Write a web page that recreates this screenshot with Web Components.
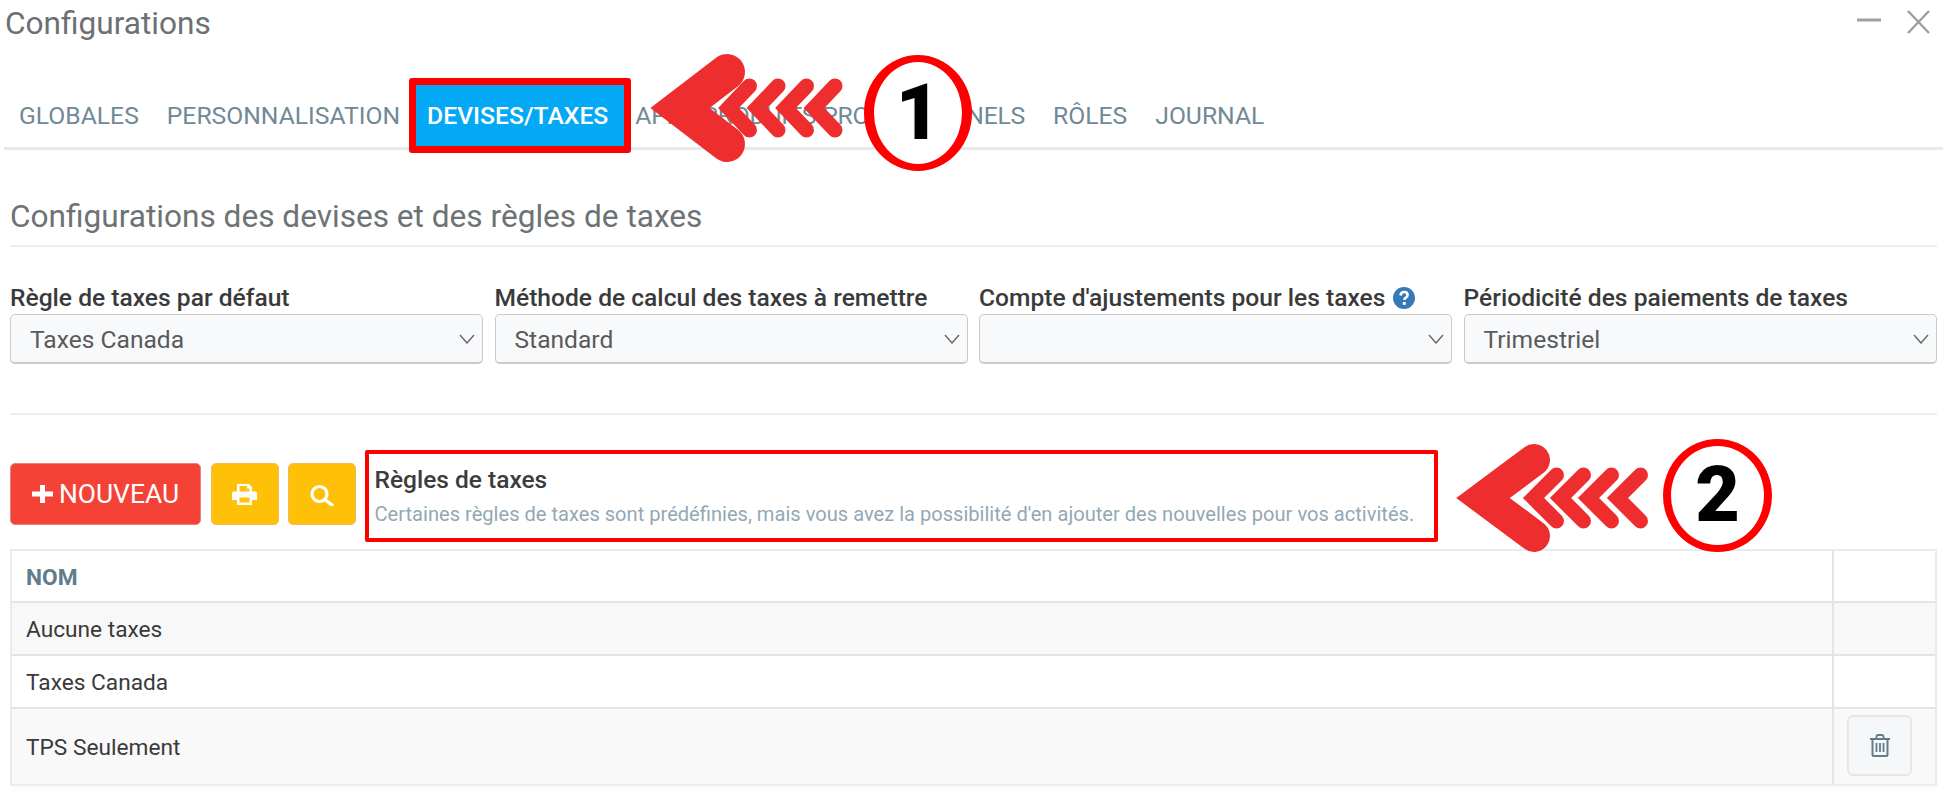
<!DOCTYPE html>
<html lang="fr">
<head>
<meta charset="utf-8">
<title>Configurations</title>
<style>
  html, body { margin: 0; background: #fff; }
  body { font-family: Roboto, "Liberation Sans", sans-serif; }
</style>
</head>
<body>
<config-page></config-page>

<script>
class ConfigHeader extends HTMLElement {
  constructor(){
    super();
    this.attachShadow({mode: 'open'});
    this.shadowRoot.innerHTML = `
      <style>
        :host { display: flex; justify-content: space-between; height: 78px; padding: 7px 13px 0 5px; box-sizing: border-box; }
        h1 { margin: 0; font-size: 31.6px; line-height: 34px; font-weight: 400; color: #6c7072; }
        .actions { display: flex; gap: 26px; align-items: flex-start; padding-top: 3px; }
        svg { display: block; }
      </style>
      <h1><slot></slot></h1>
      <div class="actions">
        <svg width="24" height="24" viewBox="0 0 24 24"><path d="M0 10h24" stroke="#9e9e9e" stroke-width="3"/></svg>
        <svg width="23" height="24" viewBox="0 0 23 24"><path d="M1 1l21 22M22 1L1 23" stroke="#9e9e9e" stroke-width="2.4" fill="none"/></svg>
      </div>
    `;
  }
}

class TabBar extends HTMLElement {
  constructor(){
    super();
    this.attachShadow({mode: 'open'});
    this.shadowRoot.innerHTML = `
      <style>
        :host { display: flex; align-items: stretch; height: 72px; margin-left: 4px; border-bottom: 3px solid #e9e9ea; box-sizing: border-box; padding: 7px 0 0 0; }
      </style>
      <slot></slot>
    `;
  }
}

class TabItem extends HTMLElement {
  constructor(){
    super();
    this.attachShadow({mode: 'open'});
    this.shadowRoot.innerHTML = `
      <style>
        :host { display: block; position: relative; padding: 16px 13px 0 15px; font-size: 24.7px; line-height: 30px; color: #6f8997; white-space: nowrap; }
        :host([active]) { background: #03a9f4; color: #fff; font-weight: 500; height: 62px; box-sizing: border-box; padding: 16px 16px 0 11px; margin: 0 -4px 0 3px; }
        :host([active])::after { content: ""; position: absolute; inset: -7px -7px -6px -7px; border: 7px solid #ff0000; border-radius: 3px; }
      </style>
      <slot></slot>
    `;
  }
}

class SelectField extends HTMLElement {
  constructor(){
    super();
    this.attachShadow({mode: 'open'});
    this.shadowRoot.innerHTML = `
      <style>
        :host { display: block; min-width: 0; }
        label { display: flex; align-items: center; height: 21px; margin-bottom: 6px; font-size: 24.6px; line-height: 21px; font-weight: 500; color: #3a3a3a; white-space: nowrap; }
        .box { display: flex; align-items: center; justify-content: space-between; height: 50px; padding: 1px 7px 0 19px; box-sizing: border-box;
          background: #f8f9fb; border: 1px solid #c9cacb; border-bottom-width: 2px; border-radius: 5px; font-size: 24.6px; color: #5a5a5a; }
        svg { flex: none; }
      </style>
      <label><slot name="label"></slot></label>
      <div class="box">
        <span><slot></slot></span>
        <svg width="16" height="10" viewBox="0 0 16 10"><path d="M1 1l7 8 7-8" fill="none" stroke="#666" stroke-width="1.4"/></svg>
      </div>
    `;
  }
}

class ToolButton extends HTMLElement {
  constructor(){
    super();
    this.attachShadow({mode: 'open'});
    this.shadowRoot.innerHTML = `
      <style>
        :host { display: flex; align-items: center; justify-content: center; gap: 6px; height: 62px; margin-top: 13px; box-sizing: border-box; width: 68px; border-radius: 5px;
          background: #ffc107; border: 1px solid #f3b95a; color: #fff; font-size: 26.4px; }
        :host([danger]) { width: 191px; background: #f44336; border-color: #e8827a; }
      </style>
      <slot></slot>
    `;
  }
}

class RulesCallout extends HTMLElement {
  constructor(){
    super();
    this.attachShadow({mode: 'open'});
    this.shadowRoot.innerHTML = `
      <style>
        :host { display: block; width: 1073px; height: 92px; margin-left: -1px; box-sizing: border-box; border: 4px solid #ff0000; padding: 12px 6px 0; border-radius: 2px; }
        h2 { margin: 0; font-size: 24.5px; line-height: 28px; font-weight: 500; color: #3c3c3c; }
        p { margin: 8px 0 0; font-size: 20.1px; line-height: 24px; color: #93a8b4; white-space: nowrap; }
      </style>
      <h2><slot name="title"></slot></h2>
      <p><slot></slot></p>
    `;
  }
}

class RulesTable extends HTMLElement {
  constructor(){
    super();
    this.attachShadow({mode: 'open'});
    this.shadowRoot.innerHTML = `
      <style>
        :host { display: block; border: 2px solid #e8ecee; border-top-color: #e6edf2; box-sizing: border-box; box-shadow: 0 5px 6px rgba(0,0,0,.015); }
      </style>
      <slot></slot>
    `;
  }
}

class RulesRow extends HTMLElement {
  constructor(){
    super();
    this.attachShadow({mode: 'open'});
    this.shadowRoot.innerHTML = `
      <style>
        :host { display: grid; grid-template-columns: 1fr 103px; height: 53px; box-sizing: border-box; border-top: 2px solid #e3e4e4; font-size: 22.7px; color: #3a3a3a; background: #fff; }
        :host([first]) { border-top: 0; height: 50px; font-weight: 700; color: #607d8b; }
        :host([shade]) { background: #f8f8f8; }
        :host([tall]) { height: 77px; background: #f9f9fa; }
        .name { display: flex; align-items: center; padding: 2px 0 0 14px; }
        .end { display: flex; align-items: center; justify-content: center; border-left: 2px solid #e3e4e4; padding-right: 10px; }
      </style>
      <div class="name"><slot></slot></div>
      <div class="end"><slot name="end"></slot></div>
    `;
  }
}

class TrashButton extends HTMLElement {
  constructor(){
    super();
    this.attachShadow({mode: 'open'});
    this.shadowRoot.innerHTML = `
      <style>
        :host { display: flex; align-items: center; justify-content: center; width: 65px; height: 61px; margin-bottom: 2px; box-sizing: border-box; border: 2px solid #e1e7ea; border-radius: 6px; background: #f5f7f8; }
      </style>
      <svg width="20" height="23" viewBox="0 0 20 23" fill="none" stroke="#607d8b">
        <path d="M0 5h20" stroke-width="2"/>
        <path d="M6.500 5V2.600Q6.500 1 8 1h4q1.500 0 1.500 1.600V5" stroke-width="1.800"/>
        <path d="M2.500 5v15.500q0 1.500 1.500 1.500h12q1.500 0 1.500-1.500V5" stroke-width="2"/>
        <path d="M6.500 9v9M10 9v9M13.500 9v9" stroke-width="1.800"/>
      </svg>
    `;
  }
}

class CalloutMark extends HTMLElement {
  constructor(){
    super();
    this.attachShadow({mode: 'open'});
    this.shadowRoot.innerHTML = `
      <style>
        :host { display: block; position: absolute; left: var(--x); top: var(--y); width: 330px; height: 125px; }
        svg { position: absolute; left: 0; top: 0; overflow: visible; }
        .num { position: absolute; left: var(--nx); top: var(--ny); width: var(--nw); height: var(--nh); box-sizing: border-box; border: 7px solid #ff0000; border-left-width: var(--side); border-right-width: var(--side); border-radius: 50%; background: #fff;
          display: flex; align-items: center; justify-content: center; font-family: Roboto, "Liberation Sans", sans-serif; font-weight: 900; font-size: 77px; line-height: 1; color: #000; }
      </style>
      <svg width="200" height="125" viewBox="0 0 200 125" fill="none" stroke="#ee2e2e" stroke-linecap="round" stroke-linejoin="miter">
        <g stroke-width="15" class="small"></g>
        <path class="big"/>
      </svg>
      <div class="num"><slot></slot></div>
    `;
  }
  connectedCallback() {
    // four small chevrons first, the big one goes in front
    const mid = 54;
    const [tip, back, arm, width] = this.getAttribute('big').split(',').map(Number);
    const [sBack, sArm] = this.getAttribute('small').split(',').map(Number);
    const tips = this.getAttribute('tips').split(',').map(Number);
    this.shadowRoot.querySelector('.small').innerHTML = tips.map(t =>
      `<path d="M${t + sBack} ${mid - sArm}L${t} ${mid}L${t + sBack} ${mid + sArm}"/>`).join('');
    const big = this.shadowRoot.querySelector('.big');
    big.setAttribute('stroke-width', width);
    big.setAttribute('d', `M${back} ${mid - arm}L${tip} ${mid}L${back} ${mid + arm}`);
  }
}

class ConfigPage extends HTMLElement {
  constructor(){
    super();
    this.attachShadow({mode: 'open'});
    this.shadowRoot.innerHTML = `
      <style>
        :host { display: block; position: relative; height: 795px; overflow: hidden; }
        h3 { margin: 0; padding: 0 0 11px; font-size: 31.6px; line-height: 34px; font-weight: 400; color: #6d7275; border-bottom: 2px solid #eeeeee; }
        .content { padding: 50px 6px 0 10px; }
        .fields { display: grid; grid-template-columns: repeat(4, 473px); column-gap: 11.5px; margin-top: 40px; }
        hr { height: 2px; border: 0; background: #efefef; margin: 49px 0 0; }
        .toolbar { display: flex; align-items: flex-start; gap: 9.5px; margin-top: 35px; }
        .toolbar svg { display: block; }
        rules-table { margin-top: 7px; }
        .help { width: 22px; height: 22px; margin-left: 8px; flex: none; }
        [slot="label"] { display: inline-flex; align-items: center; }
        .long { letter-spacing: -.2px; }
      </style>
      <config-header>Configurations</config-header>
      <tab-bar>
        <tab-item>GLOBALES</tab-item>
        <tab-item>PERSONNALISATION</tab-item>
        <tab-item active>DEVISES/TAXES</tab-item>
        <tab-item class="long">APPS PRODUITS PROFESSIONNELS</tab-item>
        <tab-item>RÔLES</tab-item>
        <tab-item>JOURNAL</tab-item>
      </tab-bar>
      <div class="content">
        <h3>Configurations des devises et des règles de taxes</h3>
        <div class="fields">
          <select-field><span slot="label">Règle de taxes par défaut</span>Taxes Canada</select-field>
          <select-field><span slot="label">Méthode de calcul des taxes à remettre</span>Standard</select-field>
          <select-field><span slot="label">Compte d'ajustements pour les taxes<svg class="help" viewBox="0 0 22 22"><circle cx="11" cy="11" r="11" fill="#337ab7"/><path d="M7.500 8.500q.4-3.500 3.700-3.500 3.400 0 3.400 3 0 1.800-2 2.900-1.100.6-1.100 2.100" fill="none" stroke="#fff" stroke-width="2.600"/><rect x="9.800" y="15" width="2.900" height="2.800" fill="#fff"/></svg></span></select-field>
          <select-field><span slot="label">Périodicité des paiements de taxes</span>Trimestriel</select-field>
        </div>
        <hr>
        <div class="toolbar">
          <tool-button danger>
            <svg width="21" height="18" viewBox="0 0 21 18"><path d="M8 0h5v6.500h8v5h-8V18H8v-6.500H0v-5h8z" fill="#fff"/></svg>
            <span>NOUVEAU</span>
          </tool-button>
          <tool-button>
            <svg width="25" height="21" viewBox="0 0 25 21" fill="#fff"><path d="M5 0h12l3 3v5h-2.500V4.500H15V2H7.500v6H5z"/><path d="M2 7.500h21q2 0 2 2V16h-5v5H5v-5H0V9.500q0-2 2-2zM7.500 13.500v5h10v-5z" fill-rule="evenodd"/></svg>
          </tool-button>
          <tool-button>
            <svg width="24" height="23" viewBox="0 0 24 23" fill="none" stroke="#fff"><circle cx="9.500" cy="11" r="7.500" stroke-width="3.200"/><path d="M15.500 17l6.500 5" stroke-width="3.400" stroke-linecap="round"/></svg>
          </tool-button>
          <rules-callout><span slot="title">Règles de taxes</span>Certaines règles de taxes sont prédéfinies, mais vous avez la possibilité d'en ajouter des nouvelles pour vos activités.</rules-callout>
        </div>
        <rules-table>
          <rules-row first>NOM</rules-row>
          <rules-row shade>Aucune taxes</rules-row>
          <rules-row>Taxes Canada</rules-row>
          <rules-row tall>TPS Seulement<trash-button slot="end"></trash-button></rules-row>
        </rules-table>
      </div>
      <callout-mark style="--x:651px;--y:54px;--nx:213px;--ny:1px;--nw:108px;--nh:116px;--side:10px" big="29,76,36,36" small="21,22" tips="77.5,106,134.5,163">1</callout-mark>
      <callout-mark style="--x:1456px;--y:444px;--nx:207px;--ny:-5px;--nw:109px;--nh:113px;--side:8px" big="27,78,38,32" small="23,23" tips="77.5,104.5,132.5,161.5">2</callout-mark>
    `;
  }
}

customElements.define('config-header', ConfigHeader);
customElements.define('tab-bar', TabBar);
customElements.define('tab-item', TabItem);
customElements.define('select-field', SelectField);
customElements.define('tool-button', ToolButton);
customElements.define('rules-callout', RulesCallout);
customElements.define('rules-table', RulesTable);
customElements.define('rules-row', RulesRow);
customElements.define('trash-button', TrashButton);
customElements.define('callout-mark', CalloutMark);
customElements.define('config-page', ConfigPage);
</script>
</body>
</html>
